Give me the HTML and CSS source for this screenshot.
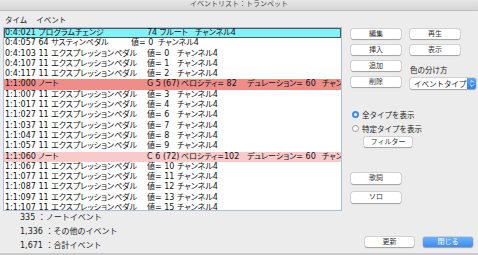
FILE: index.html
```html
<!DOCTYPE html>
<html lang="ja">
<head>
  <meta charset="UTF-8">
  <title>イベントリスト：トランペット</title>
  <link rel="stylesheet" href="styles.css">
</head>
<body>
  <div class="window">
    <!-- Title -->
    <div class="titlebar">イベントリスト：トランペット</div>

    <!-- Menu -->
    <div class="menubar">
      <span>タイム</span>
      <span>イベント</span>
    </div>

    <div class="main">
      <!-- Event list -->
      <div class="list">
        <div class="row prog sel"><span class="name">0:4:021 プログラムチェンジ</span><span class="inst">74 フルート</span><span>チャンネル4</span></div>
        <div class="row sus"><span class="name">0:4:057 64 サスティンペダル</span><span class="val">値= 0</span><span>チャンネル4</span></div>
        <div class="row ctl"><span class="name">0:4:103 11 エクスプレッションペダル</span><span class="val">値= 0</span><span>チャンネル4</span></div>
        <div class="row ctl"><span class="name">0:4:107 11 エクスプレッションペダル</span><span class="val">値= 1</span><span>チャンネル4</span></div>
        <div class="row ctl"><span class="name">0:4:117 11 エクスプレッションペダル</span><span class="val">値= 2</span><span>チャンネル4</span></div>
        <div class="row note red"><span class="name">1:1:000 ノート</span><span class="pitch">G 5</span><span class="num">(67)</span><span class="vel">ベロシティ= 82</span><span class="dur">デュレーション= 60</span><span>チャンネル4</span></div>
        <div class="row ctl"><span class="name">1:1:007 11 エクスプレッションペダル</span><span class="val">値= 3</span><span>チャンネル4</span></div>
        <div class="row ctl"><span class="name">1:1:017 11 エクスプレッションペダル</span><span class="val">値= 4</span><span>チャンネル4</span></div>
        <div class="row ctl"><span class="name">1:1:027 11 エクスプレッションペダル</span><span class="val">値= 6</span><span>チャンネル4</span></div>
        <div class="row ctl"><span class="name">1:1:037 11 エクスプレッションペダル</span><span class="val">値= 7</span><span>チャンネル4</span></div>
        <div class="row ctl"><span class="name">1:1:047 11 エクスプレッションペダル</span><span class="val">値= 8</span><span>チャンネル4</span></div>
        <div class="row ctl"><span class="name">1:1:057 11 エクスプレッションペダル</span><span class="val">値= 9</span><span>チャンネル4</span></div>
        <div class="row note pink"><span class="name">1:1:060 ノート</span><span class="pitch">C 6</span><span class="num">(72)</span><span class="vel">ベロシティ=102</span><span class="dur">デュレーション= 60</span><span>チャンネル4</span></div>
        <div class="row ctl"><span class="name">1:1:067 11 エクスプレッションペダル</span><span class="val">値= 10</span><span>チャンネル4</span></div>
        <div class="row ctl"><span class="name">1:1:077 11 エクスプレッションペダル</span><span class="val">値= 11</span><span>チャンネル4</span></div>
        <div class="row ctl"><span class="name">1:1:087 11 エクスプレッションペダル</span><span class="val">値= 12</span><span>チャンネル4</span></div>
        <div class="row ctl"><span class="name">1:1:097 11 エクスプレッションペダル</span><span class="val">値= 13</span><span>チャンネル4</span></div>
        <div class="row ctl"><span class="name">1:1:107 11 エクスプレッションペダル</span><span class="val">値= 15</span><span>チャンネル4</span></div>
      </div>

      <!-- Side controls -->
      <div class="side">
        <div class="grid">
          <button class="btn">編集</button>
          <button class="btn">再生</button>
          <button class="btn">挿入</button>
          <button class="btn">表示</button>
          <button class="btn">追加</button>
          <span class="label">色の分け方</span>
          <button class="btn">削除</button>
          <div class="select">
            <span>イベントタイプ</span>
            <span class="stepper">
              <svg width="6" height="9" viewBox="0 0 6 9"><path d="M1.2 3.4 L3 1.6 L4.8 3.4 M1.2 5.6 L3 7.4 L4.8 5.6" fill="none" stroke="#fff" stroke-width="0.9"/></svg>
            </span>
          </div>
        </div>

        <div class="radios">
          <label class="radio"><span class="dot on"></span>全タイプを表示</label>
          <label class="radio"><span class="dot"></span>特定タイプを表示</label>
          <button class="btn filter">フィルター</button>
        </div>

        <div class="extra">
          <button class="btn">歌詞</button>
          <button class="btn">ソロ</button>
        </div>
      </div>
    </div>

    <div class="footer">
      <div class="stats">
        <div>335 ：ノートイベント</div>
        <div>1,336 ：その他のイベント</div>
        <div>1,671 ：合計イベント</div>
      </div>
      <div class="actions">
        <button class="btn">更新</button>
        <button class="btn primary">閉じる</button>
      </div>
    </div>
  </div>
</body>
</html>
```

FILE: styles.css
```css
body {
  margin: 0;
  background: #ececec;
  font-family: "DejaVu Sans", "Noto Sans CJK JP", sans-serif;
  color: #222;
}

.window {
  width: 478px;
  height: 255px;
  overflow: hidden;
  background: #ececec;
}

.titlebar {
  height: 10px;
  line-height: 9px;
  font-size: 7px;
  text-align: center;
  color: #4a4a4a;
  background: linear-gradient(#e6e6e6, #d6d6d6);
  border-bottom: 1px solid #bdbdbd;
}

.menubar {
  height: 16px;
  display: flex;
  align-items: center;
  gap: 9px;
  padding-left: 5px;
  font-size: 7.5px;
  color: #222;
}

.main {
  display: flex;
  height: 184px;
  padding-left: 3px;
}

/* list */
.list {
  width: 337px;
  height: 182px;
  background: #fff;
  border: 1px solid #a9bfdd;
  overflow: hidden;
  font-size: 8px;
  font-feature-settings: "palt";
  color: #111;
}

.row {
  height: 10.3px;
  line-height: 10.3px;
  padding-left: 1px;
  white-space: nowrap;
  display: flex;
}

.row span {
  flex-shrink: 0;
}

.row.sel {
  background: #80f3f9;
  box-shadow: inset 0 0 0 1px #555;
}

.row.red {
  background: #ef8d89;
}

.row.pink {
  background: #f8cbca;
}

.sus .name { width: 126px; }
.ctl .name { width: 142px; }
.sus .val { width: 27px; }
.ctl .val { width: 30px; }

.prog .name,
.note .name { width: 142px; }
.prog .inst { width: 48px; }

.note .pitch { width: 16px; }
.note .num { width: 18px; }
.note .vel { width: 66px; }
.note .dur { width: 75px; }

/* side */
.side {
  margin-left: 9px;
  padding-top: 2px;
  font-size: 7px;
}

.btn {
  font-family: inherit;
  font-size: 7px;
  color: #333;
  background: #fff;
  border: none;
  border-radius: 2px;
  box-shadow: 0 0 0 0.5px rgba(0, 0, 0, 0.18), 0 0.5px 1px rgba(0, 0, 0, 0.25);
  height: 10px;
  width: 50px;
  padding: 0;
  line-height: 10px;
}

.grid {
  display: grid;
  grid-template-columns: 50px 66px;
  column-gap: 9px;
  row-gap: 6px;
}

.label {
  align-self: end;
  font-size: 7.5px;
  line-height: 9px;
  margin-bottom: -4px;
}

.select {
  height: 11px;
  background: #fff;
  border-radius: 2px;
  box-shadow: 0 0 0 0.5px rgba(0, 0, 0, 0.18), 0 0.5px 1px rgba(0, 0, 0, 0.25);
  display: flex;
  align-items: center;
  justify-content: space-between;
  padding-left: 4px;
  font-size: 7.5px;
  margin-top: 0.5px;
}

.stepper {
  width: 9px;
  height: 11px;
  background: linear-gradient(#5fa6f7, #2f7ff0);
  border-radius: 0 2px 2px 0;
  display: flex;
  align-items: center;
  justify-content: center;
}

.radios {
  margin-top: 19px;
  padding-left: 1px;
  display: flex;
  flex-direction: column;
  align-items: flex-start;
}

.radio {
  display: flex;
  align-items: center;
  gap: 3px;
  height: 14px;
  font-size: 7.5px;
}

.dot {
  width: 7px;
  height: 7px;
  border-radius: 50%;
  background: #fff;
  box-sizing: border-box;
  border: 0.5px solid #9a9a9a;
}

.dot.on {
  border: 2.2px solid #3d8bf3;
}

.btn.filter {
  width: 48px;
  margin-left: 12px;
  margin-top: 1px;
}

.extra {
  margin-top: 26px;
  display: flex;
  flex-direction: column;
  gap: 8px;
}

.extra .btn {
  height: 11px;
}

/* footer */
.footer {
  display: flex;
  height: 42px;
  border-bottom: 2px solid #c9c9c9;
}

.stats {
  flex: 1;
  padding-left: 20px;
  font-size: 8px;
  line-height: 14px;
}

.actions {
  align-self: flex-end;
  display: flex;
  gap: 9px;
  margin-bottom: 6px;
  padding-right: 5px;
}

.actions .btn {
  width: 49px;
}

.btn.primary {
  width: 50px;
  color: #fff;
  background: linear-gradient(#6cb2fb, #3d8cf4);
}
```
